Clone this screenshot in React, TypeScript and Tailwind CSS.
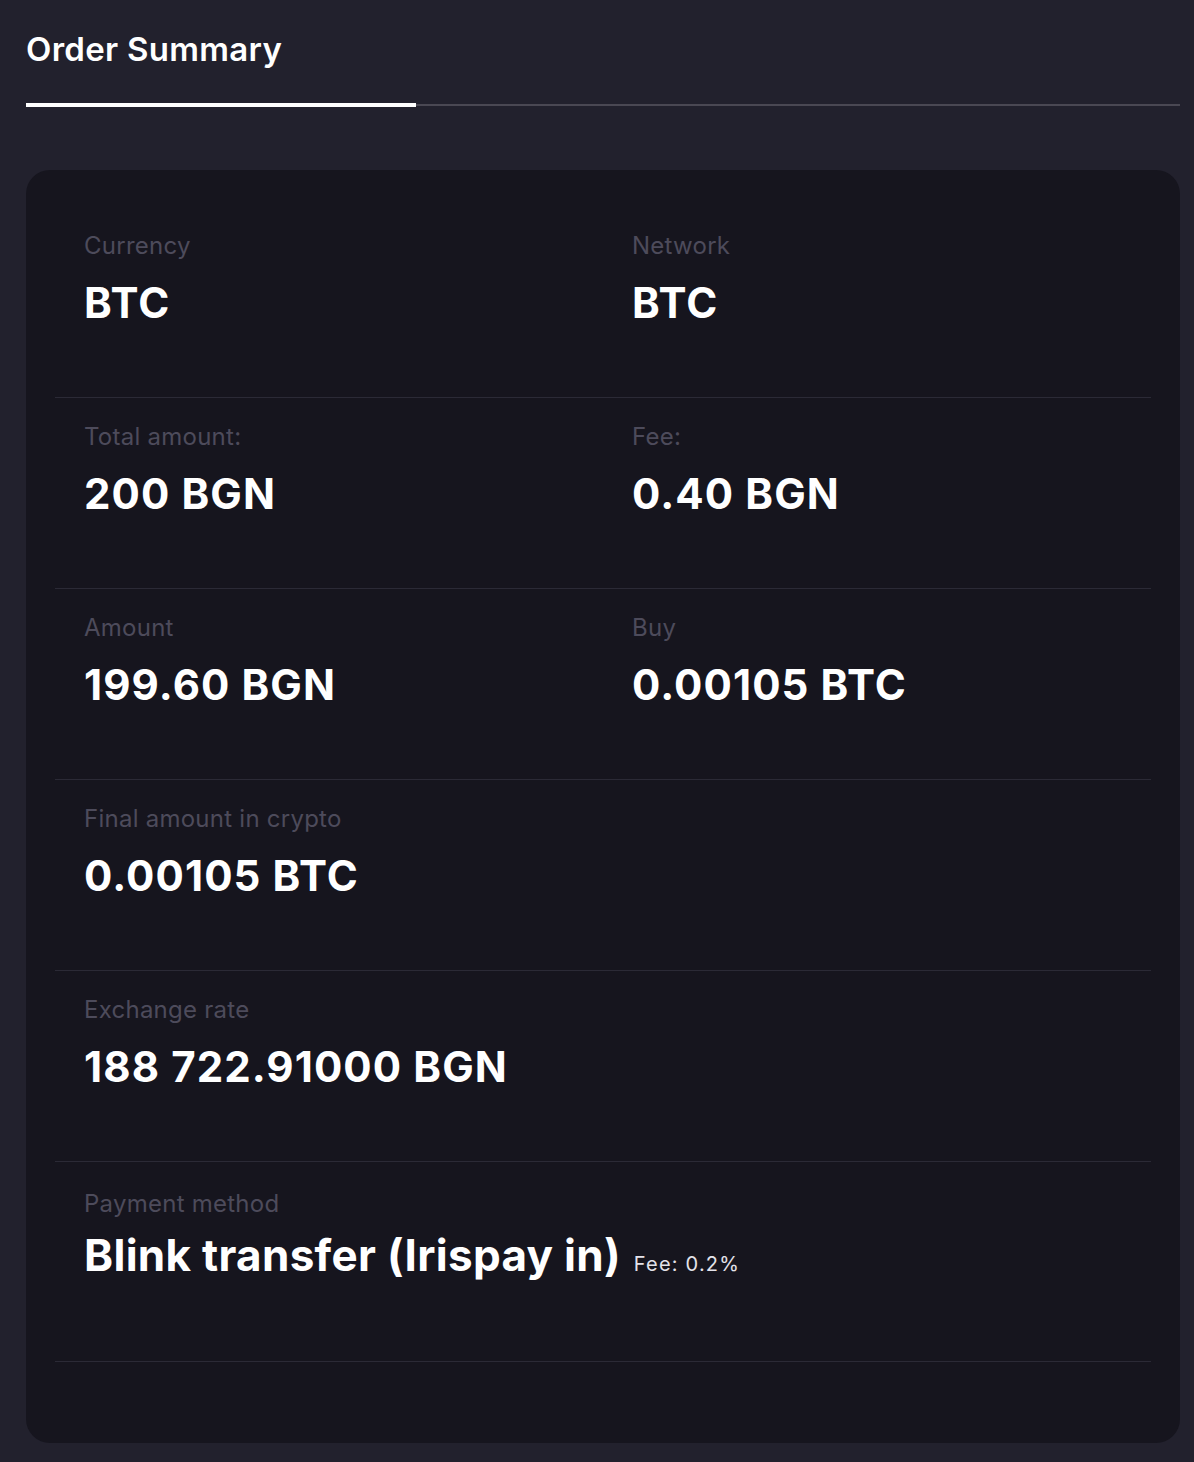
import React from "react";

const font = { fontFamily: 'Inter, "Noto Sans", sans-serif' };

function Label({ children }: { children: React.ReactNode }) {
  return <div className="text-[24px] leading-[30px] tracking-[0.25px] text-[#4d4b5b]">{children}</div>;
}

function Cell({ label, value }: { label: string; value: string }) {
  return (
    <div className="pl-[29px]">
      <Label>{label}</Label>
      <div className="mt-[18px] text-[42px] leading-[48px] font-bold text-white tracking-[1.1px]">{value}</div>
    </div>
  );
}

function Row({ children }: { children: React.ReactNode }) {
  return <div className="grid grid-cols-2 border-b border-[#2b2a36] pt-[24px] h-[191px]">{children}</div>;
}

export default function App() {
  return (
    <div className="min-h-[1462px] w-[1194px] bg-[#22212d] pl-[26px] pr-[14px] pt-[27px] pb-[20px]" style={font}>
      <div className="text-[33px] leading-[44px] font-semibold tracking-[0.3px] text-white">Order Summary</div>
      <div className="mt-[32px] flex items-center">
        <div className="h-[4px] w-[390px] bg-white" />
        <div className="h-[2px] flex-1 bg-[#4a4853]" />
      </div>
      <div className="mt-[63px] rounded-[24px] bg-[#16151e] px-[29px] pt-[37px] pb-[81px]">
        <Row>
          <Cell label="Currency" value="BTC" />
          <Cell label="Network" value="BTC" />
        </Row>
        <Row>
          <Cell label="Total amount:" value="200 BGN" />
          <Cell label="Fee:" value="0.40 BGN" />
        </Row>
        <Row>
          <Cell label="Amount" value="199.60 BGN" />
          <Cell label="Buy" value="0.00105 BTC" />
        </Row>
        <Row>
          <Cell label="Final amount in crypto" value="0.00105 BTC" />
          <div />
        </Row>
        <Row>
          <Cell label="Exchange rate" value="188 722.91000 BGN" />
          <div />
        </Row>
        <div className="border-b border-[#2b2a36] pt-[27px] h-[200px] pl-[29px]">
          <Label>Payment method</Label>
          <div className="mt-[10px] flex items-baseline">
            <span className="text-[44px] leading-[52px] font-bold tracking-[0.3px] text-white">Blink transfer (Irispay in)</span>
            <span className="ml-[13px] text-[20px] tracking-[1.2px] text-[#e4e3ea]">Fee: 0.2%</span>
          </div>
        </div>
      </div>
    </div>
  );
}
